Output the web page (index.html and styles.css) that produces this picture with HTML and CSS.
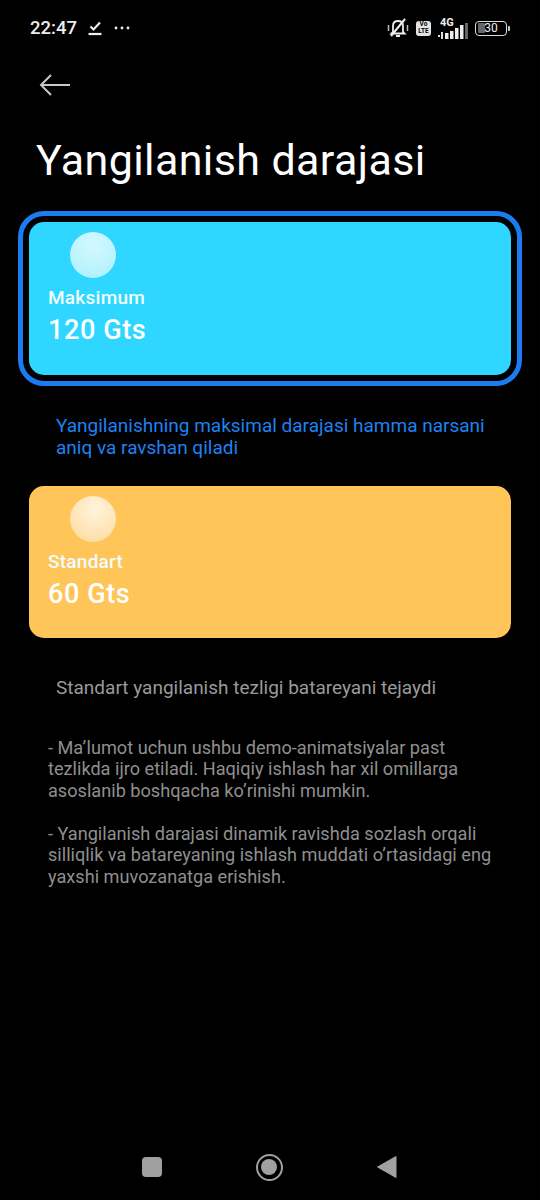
FILE: index.html
```html
<!DOCTYPE html>
<html lang="uz">
<head>
<meta charset="utf-8">
<title>Yangilanish darajasi</title>
<link rel="stylesheet" href="styles.css">
</head>
<body>
<div class="screen">
  <header class="status">
    <div class="status-left">
      <span class="time">22:47</span>
      <svg class="ic-check" width="16" height="18" viewBox="0 0 16 18"><path d="M3.500 7.500 6.500 10.500 13 3.500" fill="none" stroke="#eee" stroke-width="2.200"/><path d="M1.500 15H14.500" stroke="#eee" stroke-width="2.200"/></svg>
      <svg class="ic-dots" width="16" height="6" viewBox="0 0 16 6"><circle cx="2" cy="3" r="1.400" fill="#eee"/><circle cx="8" cy="3" r="1.400" fill="#eee"/><circle cx="14" cy="3" r="1.400" fill="#eee"/></svg>
    </div>
    <div class="status-right">
      <svg width="24" height="22" viewBox="0 0 24 22"><path d="M7 15V9c0-3 2-5 5-5s5 2 5 5v6l1.500 1.500h-13Z" fill="none" stroke="#eee" stroke-width="1.800"/><path d="M10 19h4" stroke="#eee" stroke-width="2"/><path d="M5 19 19 2" stroke="#eee" stroke-width="2"/><path d="M2.500 8v6M21.500 8v6" stroke="#bbb" stroke-width="1.500"/></svg>
      <span class="volte">Vo<br>LTE</span>
      <div class="signal">
        <span class="net">4G</span>
        <svg width="31" height="16" viewBox="0 0 31 16"><rect x="1" y="12" width="2" height="2" fill="#ddd"/><rect x="4" y="9" width="2" height="7" fill="#ddd"/><rect x="8" y="10" width="3.500" height="6" fill="#eee"/><rect x="13" y="8" width="3.500" height="8" fill="#eee"/><rect x="18" y="5" width="3.500" height="11" fill="#eee"/><rect x="23" y="2" width="3.500" height="14" fill="#eee"/><rect x="28" y="0" width="3" height="16" fill="#666"/></svg>
      </div>
      <div class="battery"><div class="battery-body"><span class="battery-fill"></span><span class="battery-num">30</span></div><span class="battery-tip"></span></div>
    </div>
  </header>

  <div class="back">
    <svg width="32" height="24" viewBox="0 0 32 24"><path d="M31 12H2M12 2 2 12 12 22" fill="none" stroke="#c8c8c8" stroke-width="2"/></svg>
  </div>

  <h1 class="title">Yangilanish darajasi</h1>

  <section class="ring">
    <div class="card card-blue">
      <span class="ball ball-blue"></span>
      <div class="card-label">Maksimum</div>
      <div class="card-value">120 Gts</div>
    </div>
  </section>
  <p class="desc desc-active">Yangilanishning maksimal darajasi hamma narsani aniq va ravshan qiladi</p>

  <section class="plain">
    <div class="card card-yellow">
      <span class="ball ball-yellow"></span>
      <div class="card-label">Standart</div>
      <div class="card-value">60 Gts</div>
    </div>
  </section>
  <p class="desc desc-muted">Standart yangilanish tezligi batareyani tejaydi</p>

  <div class="notes">
    <p>- Ma’lumot uchun ushbu demo-animatsiyalar past tezlikda ijro etiladi. Haqiqiy ishlash har xil omillarga asoslanib boshqacha ko’rinishi mumkin.</p>
    <p>- Yangilanish darajasi dinamik ravishda sozlash orqali silliqlik va batareyaning ishlash muddati o’rtasidagi eng yaxshi muvozanatga erishish.</p>
  </div>

  <nav class="navbar">
    <span class="nav-square"></span>
    <span class="nav-home"><span class="nav-home-dot"></span></span>
    <svg width="22" height="24" viewBox="0 0 22 24"><path d="M20 1.500V22.500L1.500 12Z" fill="#a0a0a0" stroke="#a0a0a0" stroke-linejoin="round"/></svg>
  </nav>
</div>
</body>
</html>
```
FILE: styles.css
```css
* { box-sizing: border-box; }
html, body { margin: 0; padding: 0; background: #000; }
body { font-family: Roboto, "Liberation Sans", sans-serif; }
.screen { width: 540px; height: 1200px; position: relative; overflow: hidden; background: #000; color: #fff; display: flex; flex-direction: column; }

.status { height: 56px; padding: 16px 30px 0; display: flex; justify-content: space-between; align-items: flex-start; flex: none; }
.status-left { display: flex; align-items: center; height: 24px; }
.time { font-size: 18.500px; font-weight: 500; color: #eee; }
.ic-check { margin-left: 10px; }
.ic-dots { margin-left: 11px; }
.status-right { display: flex; align-items: center; gap: 6px; height: 24px; }
.volte { width: 15px; height: 15px; border-radius: 3px; background: #e4e4e4; color: #000; font-size: 6.500px; font-weight: 700; line-height: 7px; text-align: center; padding-top: 0.500px; }
.signal { position: relative; width: 31px; height: 20px; }
.signal svg { position: absolute; left: 0; bottom: -1px; }
.net { position: absolute; left: 3px; top: -2px; font-size: 11px; font-weight: 700; color: #eee; line-height: 13px; }
.battery { display: flex; align-items: center; gap: 1px; margin-left: 1px; }
.battery-body { width: 32px; height: 15px; border: 1.500px solid #ddd; border-radius: 4px; position: relative; display: flex; align-items: center; justify-content: center; }
.battery-fill { position: absolute; left: 1.500px; top: 1.500px; bottom: 1.500px; width: 7px; background: #666; border-radius: 1px; }
.battery-num { position: relative; font-size: 12px; color: #eee; line-height: 1; }
.battery-tip { width: 2px; height: 5px; background: #ccc; border-radius: 0 1px 1px 0; }

.back { height: 24px; margin: 17px 0 0 39px; flex: none; display: flex; }
.title { margin: 35px 0 0 36px; font-size: 43px; font-weight: 400; line-height: 56px; letter-spacing: 0.400px; color: #fff; white-space: nowrap; }

.ring { margin: 23px 18px 0; height: 175px; border: 5px solid #1a7cf0; border-radius: 26px; padding: 6px; flex: none; }
.plain { margin: 0 29px; flex: none; }
.card { height: 153px; border-radius: 15px; padding: 10px 19px 0; position: relative; }
.plain .card { height: 152px; }
.card-blue { background: #2fd6ff; }
.card-yellow { background: #ffc559; }
.ball { display: block; width: 46px; height: 46px; border-radius: 50%; margin-left: 22px; }
.ball-blue { background: radial-gradient(circle at 50% 28%, #d4f8ff 0%, #c2f5fe 45%, #a8f0fc 100%); }
.ball-yellow { background: radial-gradient(circle at 55% 28%, #fff4dc 0%, #fee8bf 45%, #fed896 100%); }
.card-label { margin-top: 8px; font-size: 19px; letter-spacing: 0.250px; line-height: 24px; font-weight: 500; color: #f2fcff; }
.card-value { margin-top: 4px; font-size: 27px; letter-spacing: 0.600px; line-height: 32px; font-weight: 500; color: #fff; }

.desc { margin: 0; padding: 0 50px 0 56px; font-size: 19px; line-height: 22px; flex: none; }
.desc-active { margin-top: 29px; height: 71px; color: #1e82f0; }
.desc-muted { margin-top: 39px; color: #9a9a9a; }

.notes { margin: 38px 0 0 48px; padding-right: 46px; font-size: 18.150px; line-height: 21.400px; color: #8f8f8f; }
.notes p { margin: 0 0 21.500px; }

.navbar { position: absolute; left: 0; right: 0; bottom: 20px; height: 26px; display: flex; justify-content: space-between; align-items: center; padding: 0 142px; }
.nav-square { width: 20px; height: 20px; background: #a0a0a0; border-radius: 4px; }
.nav-home { width: 27px; height: 27px; border: 2.500px solid #a0a0a0; border-radius: 50%; display: flex; align-items: center; justify-content: center; }
.nav-home-dot { width: 16px; height: 16px; background: #a0a0a0; border-radius: 50%; }
```
